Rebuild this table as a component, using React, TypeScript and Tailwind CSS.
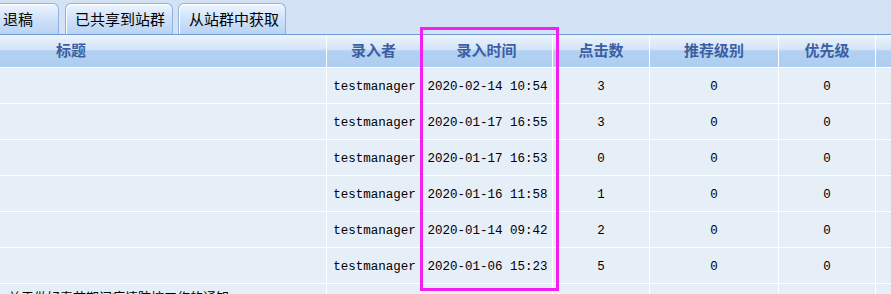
import React from "react";

const rows = [
  ["testmanager", "2020-02-14 10:54", "3", "0", "0"],
  ["testmanager", "2020-01-17 16:55", "3", "0", "0"],
  ["testmanager", "2020-01-17 16:53", "0", "0", "0"],
  ["testmanager", "2020-01-16 11:58", "1", "0", "0"],
  ["testmanager", "2020-01-14 09:42", "2", "0", "0"],
  ["testmanager", "2020-01-06 15:23", "5", "0", "0"],
];

const cjk = { fontFamily: '"Noto Sans CJK SC", "Noto Sans", sans-serif' };
const mono = { fontFamily: '"Liberation Mono", "Noto Sans CJK SC", monospace' };

function Tab({ label, className }: { label: string; className: string }) {
  return (
    <div
      className={`h-[31px] rounded-t-[6px] border border-b-0 border-[#8fb2df] bg-gradient-to-b from-[#eef5fe] via-[#cfe2f9] to-[#b9d3f3] shadow-[inset_1px_1px_0_#ffffff] flex items-center text-[15px] text-black ${className}`}
      style={cjk}
    >
      {label}
    </div>
  );
}

export default function App() {
  return (
    <div className="relative w-[891px] h-[294px] overflow-hidden bg-[#e6eef8]">
      {/* tab bar */}
      <div className="h-[34px] bg-[#d4e2f5] flex items-end gap-[6px]">
        <Tab label="退稿" className="w-[79px] -ml-[20px] pl-[22px]" />
        <Tab label="已共享到站群" className="w-[108px] pl-[9px]" />
        <Tab label="从站群中获取" className="w-[108px] -ml-[1px] pl-[10px]" />
      </div>
      <div className="h-px bg-[#6e9bd5]" />
      {/* header */}
      <div
        className="flex h-[32px] bg-[linear-gradient(to_bottom,#edf4fd_0%,#d3e4f7_45%,#b2d1f2_50%,#aecef1_100%)] text-[15px] font-bold text-[#3c5fa3]"
        style={cjk}
      >
        <div className="w-[327px] border-r border-white flex items-center pl-[56px] pb-[2px]">标题</div>
        <div className="w-[94px] border-r border-white flex items-center justify-center pb-[2px]">录入者</div>
        <div className="w-[132px] border-r border-white flex items-center justify-center pb-[2px]">录入时间</div>
        <div className="w-[97px] border-r border-white flex items-center justify-center pb-[2px]">点击数</div>
        <div className="w-[129px] border-r border-white flex items-center justify-center pb-[2px]">推荐级别</div>
        <div className="w-[97px] border-r border-white flex items-center justify-center pb-[2px]">优先级</div>
        <div className="flex-1" />
      </div>
      {/* rows */}
      {rows.map((r, i) => (
        <div key={i} className="flex h-[36px] border-t border-white text-[12.5px] text-black" style={mono}>
          <div className="w-[327px] border-r border-white" />
          <div className="w-[94px] border-r border-white flex items-center justify-center pl-[2px] pt-[3px]">{r[0]}</div>
          <div className="w-[132px] border-r border-white flex items-center justify-center pl-[2px] pt-[3px]">{r[1]}</div>
          <div className="w-[97px] border-r border-white flex items-center justify-center pt-[3px]">{r[2]}</div>
          <div className="w-[129px] border-r border-white flex items-center justify-center pt-[3px]">{r[3]}</div>
          <div className="w-[97px] border-r border-white flex items-center justify-center pt-[3px]">{r[4]}</div>
          <div className="flex-1" />
        </div>
      ))}
      <div className="flex h-[36px] border-t border-white text-[13px] text-black">
        <div className="w-[327px] border-r border-white pl-[8px] pt-[3px] leading-[20px]" style={cjk}>
          关于做好春节期间疫情防控工作的通知
        </div>
        <div className="w-[94px] border-r border-white" />
        <div className="w-[132px] border-r border-white" />
        <div className="w-[97px] border-r border-white" />
        <div className="w-[129px] border-r border-white" />
        <div className="w-[97px] border-r border-white" />
        <div className="flex-1" />
      </div>
      {/* highlight box */}
      <div className="absolute left-[420px] top-[27px] w-[139px] h-[264px] border-[3px] border-[#f21ff0]" />
    </div>
  );
}
